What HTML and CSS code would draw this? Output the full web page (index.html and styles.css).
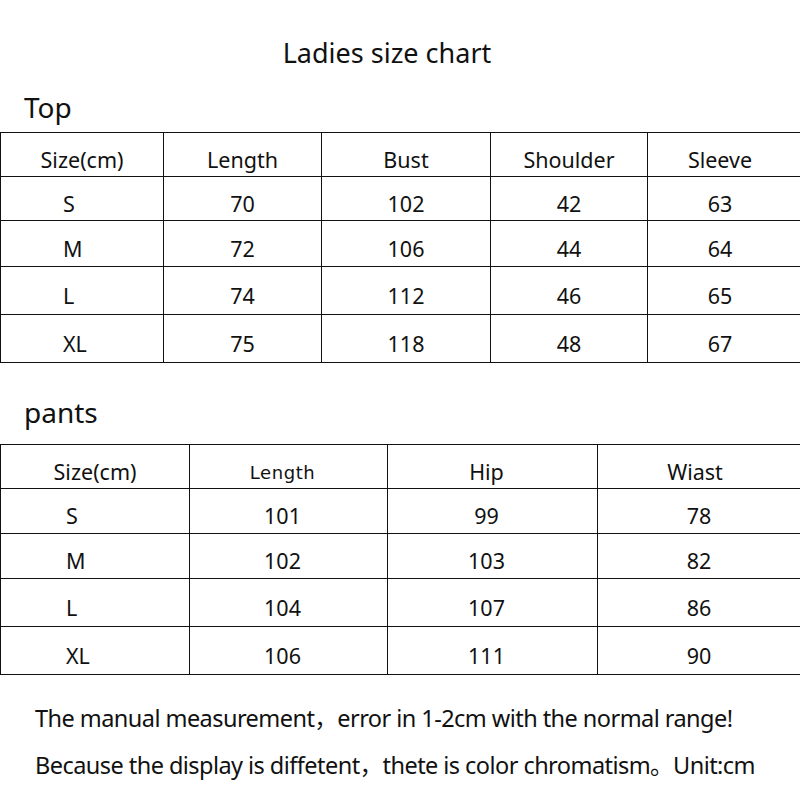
FILE: index.html
```html
<!DOCTYPE html>
<html lang="en">
<head>
<meta charset="utf-8">
<title>Ladies size chart</title>
<link rel="stylesheet" href="styles.css">
</head>
<body>
<div class="page">
  <h1 class="title">Ladies size chart</h1>
  <h2 class="section section-top">Top</h2>
  <table class="chart chart-top">
    <colgroup>
      <col class="c163"><col class="c158"><col class="c169"><col class="c157"><col class="c153">
    </colgroup>
    <tr class="r44 head"><td>Size(cm)</td><td>Length</td><td>Bust</td><td>Shoulder</td><td class="shift-s">Sleeve</td></tr>
    <tr class="r44"><td class="size">S</td><td>70</td><td>102</td><td>42</td><td class="shift-s">63</td></tr>
    <tr class="r46"><td class="size">M</td><td>72</td><td>106</td><td>44</td><td class="shift-s">64</td></tr>
    <tr class="r48"><td class="size">L</td><td>74</td><td>112</td><td>46</td><td class="shift-s">65</td></tr>
    <tr class="r48"><td class="size">XL</td><td>75</td><td>118</td><td>48</td><td class="shift-s">67</td></tr>
  </table>

  <h2 class="section section-pants">pants</h2>
  <table class="chart chart-pants">
    <colgroup>
      <col class="c189"><col class="c198"><col class="c210"><col class="c203">
    </colgroup>
    <tr class="r44 head"><td>Size(cm)</td><td class="shift"><span class="alt">Length</span></td><td class="shift">Hip</td><td class="shift-s">Wiast</td></tr>
    <tr class="r45"><td class="size">S</td><td class="shift">101</td><td class="shift">99</td><td>78</td></tr>
    <tr class="r45"><td class="size">M</td><td class="shift">102</td><td class="shift">103</td><td>82</td></tr>
    <tr class="r48"><td class="size">L</td><td class="shift">104</td><td class="shift">107</td><td>86</td></tr>
    <tr class="r48"><td class="size">XL</td><td class="shift">106</td><td class="shift">111</td><td>90</td></tr>
  </table>

  <div class="notes">
    <p>The manual measurement，error in 1-2cm with the normal range!</p>
    <p>Because the display is diffetent，thete is color chromatism。Unit:cm</p>
  </div>
</div>
</body>
</html>
```

FILE: styles.css
```css
html, body {
  margin: 0;
  padding: 0;
  background: #ffffff;
}

.page {
  width: 800px;
  height: 800px;
  color: #111111;
  font-family: "Noto Sans", "Noto Sans CJK SC", sans-serif;
  overflow: hidden;
}

.title {
  margin: 0;
  padding: 35px 26px 0 0;
  font-size: 27px;
  font-weight: 400;
  line-height: 36px;
  text-align: center;
}

.section {
  margin: 0;
  padding-left: 24px;
  font-size: 28px;
  font-weight: 400;
  line-height: 40px;
}

.section-top {
  margin-top: 16px;
  margin-bottom: 5px;
}

.section-pants {
  margin-top: 29px;
  margin-bottom: 12px;
}

.chart {
  width: 800px;
  border-collapse: collapse;
  table-layout: fixed;
  font-size: 21.5px;
}

.chart td {
  border: 1px solid #111111;
  padding: 10px 0 0 0;
  text-align: center;
  vertical-align: middle;
  line-height: 24px;
}

.chart .size {
  text-align: left;
}

.chart-top .size { padding-left: 62px; }
.chart-pants .size { padding-left: 65px; }

.chart-pants .shift { padding-right: 12px; }
.chart .shift-s { padding-right: 8px; }

.alt {
  font-family: "DejaVu Sans", sans-serif;
  font-size: 18px;
  letter-spacing: 0.6px;
}

.c163 { width: 163px; }
.c158 { width: 158px; }
.c169 { width: 169px; }
.c157 { width: 157px; }
.c153 { width: 153px; }
.c189 { width: 189px; }
.c198 { width: 198px; }
.c210 { width: 210px; }
.c203 { width: 203px; }

.r44 { height: 44px; }
.r45 { height: 45px; }
.r46 { height: 46px; }
.r48 { height: 48px; }

.notes {
  margin-top: 20px;
  padding-left: 35px;
  font-size: 23.5px;
  letter-spacing: -0.55px;
  white-space: nowrap;
}

.notes p {
  margin: 0;
  line-height: 47px;
}
```
